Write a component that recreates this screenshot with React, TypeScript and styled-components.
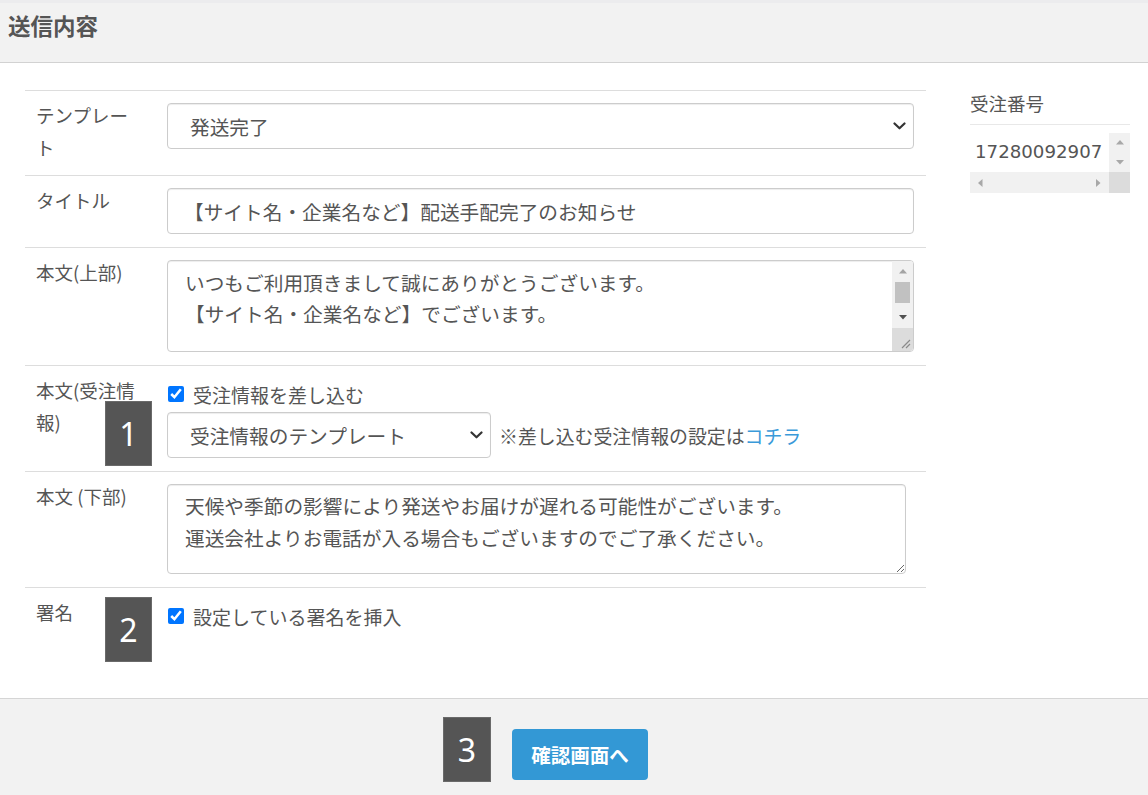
import React from "react";
import styled, { createGlobalStyle, css } from "styled-components";

const GlobalStyle = createGlobalStyle`
  html, body { margin: 0; padding: 0; background: #fff; }
  body {
    font-family: "Noto Sans CJK JP", "Noto Sans", sans-serif;
    color: #555;
  }
  * { box-sizing: border-box; }
`;

const Page = styled.div`
  width: 1148px;
  min-height: 795px;
  display: flex;
  flex-direction: column;
`;

const Header = styled.header`
  height: 63px;
  background: #f2f2f2;
  border-top: 3px solid #ececee;
  border-bottom: 1px solid #d2d2d2;
  padding: 6px 8px 0;
`;

const Title = styled.h2`
  margin: 0;
  font-size: 22.5px;
  line-height: 32px;
  font-weight: 700;
  color: #555;
`;

const Main = styled.main`
  height: 635px;
  display: flex;
  align-items: flex-start;
  padding: 27px 18px 0 25px;
  background: #fff;
`;

const FormTable = styled.div`
  width: 901px;
  display: flex;
  flex-direction: column;
`;

const Row = styled.div`
  position: relative;
  display: flex;
  border-top: 1px solid #dddddd;
`;

const LabelCell = styled.div`
  width: 142px;
  flex: none;
  padding: 8px 27px 12px 11px;
  font-size: 18.5px;
  line-height: 32px;
  color: #555;
`;

const FieldCell = styled.div`
  flex: 1;
  min-width: 0;
  padding: 12px 12px 13px 0;
`;

const fieldBase = css`
  display: block;
  border: 1px solid #cccccc;
  border-radius: 4px;
  background: #fff;
  box-shadow: inset 0 1px 1px rgba(0, 0, 0, 0.075);
  font-family: "Noto Sans CJK JP", "Noto Sans", sans-serif;
  font-size: 19.7px;
  color: #555;
  outline: none;
`;

const SelectWrap = styled.div<{ $width?: number }>`
  position: relative;
  width: ${(p) => (p.$width ? `${p.$width}px` : "100%")};
  flex: none;
`;

const Select = styled.select`
  ${fieldBase};
  appearance: none;
  -webkit-appearance: none;
  width: 100%;
  height: 46px;
  padding: 0 36px 0 22px;
`;

const Chevron = styled.svg`
  position: absolute;
  right: 8px;
  top: 50%;
  margin-top: -4px;
  width: 13px;
  height: 8px;
  pointer-events: none;
`;

const TextInput = styled.input`
  ${fieldBase};
  width: 100%;
  height: 46px;
  padding: 0 16px;
`;

const TextAreaWrap = styled.div<{ $width?: number }>`
  position: relative;
  width: ${(p) => (p.$width ? `${p.$width}px` : "100%")};
`;

const TextArea = styled.textarea<{ $height: number; $padTop: number; $lh: number; $fixed?: boolean }>`
  ${fieldBase};
  width: 100%;
  height: ${(p) => p.$height}px;
  padding: ${(p) => p.$padTop}px ${(p) => (p.$fixed ? 32 : 16)}px 6px 17px;
  line-height: ${(p) => p.$lh}px;
  resize: ${(p) => (p.$fixed ? "none" : "both")};
  overflow: hidden;
`;

/* drawn scrollbar parts (the headless page hides native scrollbars) */
const VBarOverlay = styled.div`
  position: absolute;
  top: 1px;
  right: 1px;
  bottom: 1px;
  width: 21px;
  display: flex;
  flex-direction: column;
  background: #f1f1f1;
  border-radius: 0 3px 3px 0;
  overflow: hidden;
`;

const ScrollTrack = styled.div`
  flex: 1;
  display: flex;
  flex-direction: column;
  background: #f1f1f1;
`;

const ScrollThumb = styled.div<{ $size: number }>`
  height: ${(p) => p.$size}px;
  margin: 0 3px;
  background: #c1c1c1;
`;

const ArrowBtn = styled.div`
  width: 21px;
  height: 21px;
  flex: none;
  display: flex;
  align-items: center;
  justify-content: center;
  background: #f1f1f1;
`;

const GripCorner = styled.div`
  width: 21px;
  height: 23px;
  flex: none;
  background: #dcdcdc;
  display: flex;
  align-items: flex-end;
  justify-content: flex-end;
`;

const CheckLine = styled.label`
  display: flex;
  align-items: center;
  gap: 9px;
  height: 32px;
  font-size: 19px;
  color: #555;
`;

const Checkbox = styled.input`
  width: 16px;
  height: 16px;
  margin: 0 0 0 1px;
  flex: none;
`;

const InlineGroup = styled.div`
  display: flex;
  align-items: center;
  gap: 8px;
  margin-top: 2px;
`;

const Note = styled.span`
  font-size: 18.9px;
  color: #555;
  white-space: nowrap;
`;

const Link = styled.a`
  color: #3a9ad9;
  text-decoration: none;
`;

const Badge = styled.div<{ $top: number; $left: number; $w?: number }>`
  position: absolute;
  top: ${(p) => p.$top}px;
  left: ${(p) => p.$left}px;
  width: ${(p) => p.$w ?? 47}px;
  height: 65px;
  background: #555555;
  border: 1px solid #6a6a6a;
  color: #fff;
  display: flex;
  align-items: center;
  justify-content: center;
  font-family: "Noto Sans", "Open Sans", sans-serif;
  font-size: 32px;
  font-weight: 400;
`;

const Side = styled.aside`
  width: 160px;
  margin-left: 44px;
  flex: none;
`;

const SideHeading = styled.div`
  font-size: 18.5px;
  line-height: 26px;
  color: #555;
  padding-bottom: 8px;
  border-bottom: 1px solid #e8e8e8;
`;

const OrderBox = styled.div`
  margin-top: 8px;
  width: 160px;
  height: 60px;
  display: grid;
  grid-template-columns: 1fr 21px;
  grid-template-rows: 1fr 21px;
  background: #fff;
`;

const OrderValue = styled.div`
  font-family: "DejaVu Sans", "Noto Sans", sans-serif;
  font-size: 18.2px;
  line-height: 38px;
  padding-left: 5px;
  color: #555;
  white-space: nowrap;
  overflow: hidden;
`;

const VBar = styled.div`
  display: flex;
  flex-direction: column;
  justify-content: space-between;
  background: #f1f1f1;
`;

const HBar = styled.div`
  display: flex;
  justify-content: space-between;
  background: #f1f1f1;
`;

const Corner = styled.div`
  background: #dcdcdc;
`;

const SmallArrowBtn = styled(ArrowBtn)<{ $h?: number }>`
  height: ${(p) => p.$h ?? 21}px;
`;

const Footer = styled.footer`
  height: 97px;
  background: #f2f2f2;
  border-top: 1px solid #d5d5d5;
  display: flex;
  justify-content: center;
  padding: 30px 0 0 12px;
`;

const ButtonWrap = styled.div`
  position: relative;
  height: 51px;
`;

const PrimaryButton = styled.button`
  height: 51px;
  width: 136px;
  border: none;
  border-radius: 4px;
  background: #3398d5;
  color: #fff;
  font-family: "Noto Sans CJK JP", "Noto Sans", sans-serif;
  font-size: 19.5px;
  font-weight: 700;
  cursor: pointer;
`;

type Dir = "up" | "down" | "left" | "right";
const triPoints: Record<Dir, string> = {
  up: "0,4.5 4,0 8,4.5",
  down: "0,0 4,4.5 8,0",
  left: "4.5,0 0,4 4.5,8",
  right: "0,0 4.5,4 0,8",
};

const Tri = ({ dir, color }: { dir: Dir; color: string }) => {
  const vertical = dir === "up" || dir === "down";
  return (
    <svg width={vertical ? 8 : 5} height={vertical ? 5 : 8} viewBox={vertical ? "0 0 8 5" : "0 0 5 8"}>
      <polygon points={triPoints[dir]} fill={color} />
    </svg>
  );
};

const ChevronIcon = () => (
  <Chevron viewBox="0 0 13 8">
    <path d="M1.5 1.5 L6.5 6.3 L11.5 1.5" fill="none" stroke="#333" strokeWidth="2.2" strokeLinecap="round" strokeLinejoin="round" />
  </Chevron>
);

const Grip = () => (
  <svg width="21" height="21" viewBox="0 0 21 21">
    <path d="M18 10 L10 18 M18 14 L14 18" stroke="#8a8a8a" strokeWidth="1.2" />
  </svg>
);

const upperBody =
  "いつもご利用頂きまして誠にありがとうございます。\n【サイト名・企業名など】でございます。\n\nこの度はご注文いただき誠にありがとうございます。\n本日、ご注文の商品を発送いたしました。";

const lowerBody =
  "天候や季節の影響により発送やお届けが遅れる可能性がございます。\n運送会社よりお電話が入る場合もございますのでご了承ください。";

export default function App() {
  return (
    <Page>
      <GlobalStyle />
      <Header>
        <Title>送信内容</Title>
      </Header>
      <Main>
        <FormTable>
          <Row>
            <LabelCell>テンプレート</LabelCell>
            <FieldCell>
              <SelectWrap>
                <Select defaultValue="発送完了">
                  <option>発送完了</option>
                </Select>
                <ChevronIcon />
              </SelectWrap>
            </FieldCell>
          </Row>
          <Row>
            <LabelCell>タイトル</LabelCell>
            <FieldCell>
              <TextInput type="text" defaultValue="【サイト名・企業名など】配送手配完了のお知らせ" />
            </FieldCell>
          </Row>
          <Row>
            <LabelCell>本文(上部)</LabelCell>
            <FieldCell>
              <TextAreaWrap>
                <TextArea $height={92} $padTop={6} $lh={31} $fixed defaultValue={upperBody} />
                <VBarOverlay>
                  <ArrowBtn>
                    <Tri dir="up" color="#a3a3a3" />
                  </ArrowBtn>
                  <ScrollTrack>
                    <ScrollThumb $size={21} />
                  </ScrollTrack>
                  <ArrowBtn>
                    <Tri dir="down" color="#505050" />
                  </ArrowBtn>
                  <GripCorner>
                    <Grip />
                  </GripCorner>
                </VBarOverlay>
              </TextAreaWrap>
            </FieldCell>
          </Row>
          <Row>
            <LabelCell>本文(受注情報)</LabelCell>
            <FieldCell>
              <CheckLine>
                <Checkbox type="checkbox" defaultChecked />
                受注情報を差し込む
              </CheckLine>
              <InlineGroup>
                <SelectWrap $width={324}>
                  <Select defaultValue="受注情報のテンプレート">
                    <option>受注情報のテンプレート</option>
                  </Select>
                  <ChevronIcon />
                </SelectWrap>
                <Note>
                  ※差し込む受注情報の設定は<Link href="#">コチラ</Link>
                </Note>
              </InlineGroup>
            </FieldCell>
            <Badge $top={35} $left={80}>1</Badge>
          </Row>
          <Row>
            <LabelCell>本文 (下部)</LabelCell>
            <FieldCell>
              <TextAreaWrap $width={739}>
                <TextArea $height={90} $padTop={5} $lh={32} defaultValue={lowerBody} />
              </TextAreaWrap>
            </FieldCell>
          </Row>
          <Row>
            <LabelCell>署名</LabelCell>
            <FieldCell>
              <CheckLine>
                <Checkbox type="checkbox" defaultChecked />
                設定している署名を挿入
              </CheckLine>
            </FieldCell>
            <Badge $top={9} $left={80}>2</Badge>
          </Row>
        </FormTable>
        <Side>
          <SideHeading>受注番号</SideHeading>
          <OrderBox>
            <OrderValue>17280092907</OrderValue>
            <VBar>
              <SmallArrowBtn $h={19}>
                <Tri dir="up" color="#a8a8a8" />
              </SmallArrowBtn>
              <SmallArrowBtn $h={19}>
                <Tri dir="down" color="#a8a8a8" />
              </SmallArrowBtn>
            </VBar>
            <HBar>
              <ArrowBtn>
                <Tri dir="left" color="#a8a8a8" />
              </ArrowBtn>
              <ArrowBtn>
                <Tri dir="right" color="#a8a8a8" />
              </ArrowBtn>
            </HBar>
            <Corner />
          </OrderBox>
        </Side>
      </Main>
      <Footer>
        <ButtonWrap>
          <Badge $top={-12} $left={-69} $w={48}>3</Badge>
          <PrimaryButton type="button">確認画面へ</PrimaryButton>
        </ButtonWrap>
      </Footer>
    </Page>
  );
}
